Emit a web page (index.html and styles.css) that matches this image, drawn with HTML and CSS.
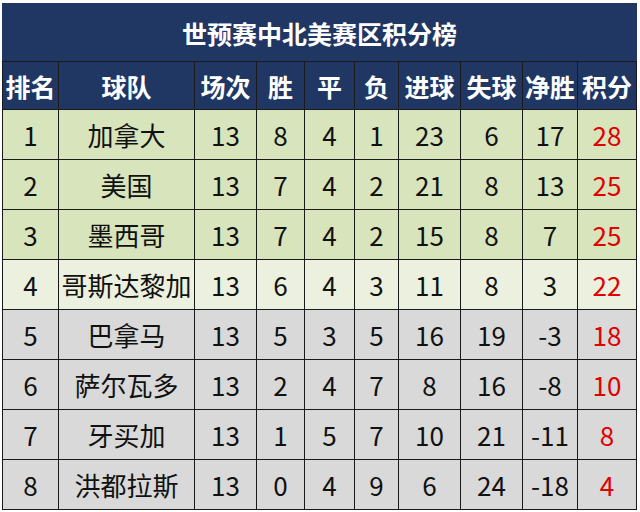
FILE: index.html
```html
<!DOCTYPE html>
<html lang="zh">
<head>
<meta charset="utf-8">
<link rel="stylesheet" href="styles.css">
</head>
<body>
<table class="standings">
<colgroup>
<col class="c-rank"><col class="c-team"><col class="c-played"><col class="c-w"><col class="c-d"><col class="c-l"><col class="c-gf"><col class="c-ga"><col class="c-gd"><col class="c-pts">
</colgroup>
<thead>
<tr class="title-row"><th colspan="10">世预赛中北美赛区积分榜</th></tr>
<tr class="head-row"><th>排名</th><th>球队</th><th>场次</th><th>胜</th><th>平</th><th>负</th><th>进球</th><th>失球</th><th>净胜</th><th>积分</th></tr>
</thead>
<tbody>
<tr class="q"><td>1</td><td>加拿大</td><td>13</td><td>8</td><td>4</td><td>1</td><td>23</td><td>6</td><td>17</td><td class="pts">28</td></tr>
<tr class="q"><td>2</td><td>美国</td><td>13</td><td>7</td><td>4</td><td>2</td><td>21</td><td>8</td><td>13</td><td class="pts">25</td></tr>
<tr class="q"><td>3</td><td>墨西哥</td><td>13</td><td>7</td><td>4</td><td>2</td><td>15</td><td>8</td><td>7</td><td class="pts">25</td></tr>
<tr class="po"><td>4</td><td>哥斯达黎加</td><td>13</td><td>6</td><td>4</td><td>3</td><td>11</td><td>8</td><td>3</td><td class="pts">22</td></tr>
<tr class="out"><td>5</td><td>巴拿马</td><td>13</td><td>5</td><td>3</td><td>5</td><td>16</td><td>19</td><td>-3</td><td class="pts">18</td></tr>
<tr class="out"><td>6</td><td>萨尔瓦多</td><td>13</td><td>2</td><td>4</td><td>7</td><td>8</td><td>16</td><td>-8</td><td class="pts">10</td></tr>
<tr class="out"><td>7</td><td>牙买加</td><td>13</td><td>1</td><td>5</td><td>7</td><td>10</td><td>21</td><td>-11</td><td class="pts">8</td></tr>
<tr class="out"><td>8</td><td>洪都拉斯</td><td>13</td><td>0</td><td>4</td><td>9</td><td>6</td><td>24</td><td>-18</td><td class="pts">4</td></tr>
</tbody>
</table>
</body>
</html>
```
FILE: styles.css
```css
html, body {
  margin: 0;
  padding: 0;
  background: #ffffff;
}
body {
  padding: 3px 0 0 2px;
  font-family: "Noto Sans CJK SC", "Noto Sans", sans-serif;
}
.standings {
  border-collapse: collapse;
  table-layout: fixed;
  width: 634px;
}
.c-rank { width: 56px; }
.c-team { width: 136px; }
.c-played { width: 62px; }
.c-w { width: 48px; }
.c-d { width: 50px; }
.c-l { width: 44px; }
.c-gf { width: 62px; }
.c-ga { width: 62px; }
.c-gd { width: 55px; }
.c-pts { width: 59px; }
.standings th, .standings td {
  border: 1px solid #1a1a1a;
  padding: 0;
  text-align: center;
  vertical-align: middle;
  white-space: nowrap;
  overflow: hidden;
}
.title-row th {
  height: 57px;
  background: #203764;
  color: #ffffff;
  font-size: 25px;
  font-weight: 700;
  border-color: #203764 #203764 #1a1a1a #203764;
}
.head-row th {
  height: 47px;
  background: #203764;
  color: #ffffff;
  font-size: 25px;
  font-weight: 700;
  letter-spacing: 0;
}
.standings td {
  height: 49px;
  font-size: 26px;
  color: #111111;
}
.q td { background: #d8e4bc; }
.po td { background: #ebf1de; }
.out td { background: #d9d9d9; }
.standings td.pts { color: #e00000; }
```
